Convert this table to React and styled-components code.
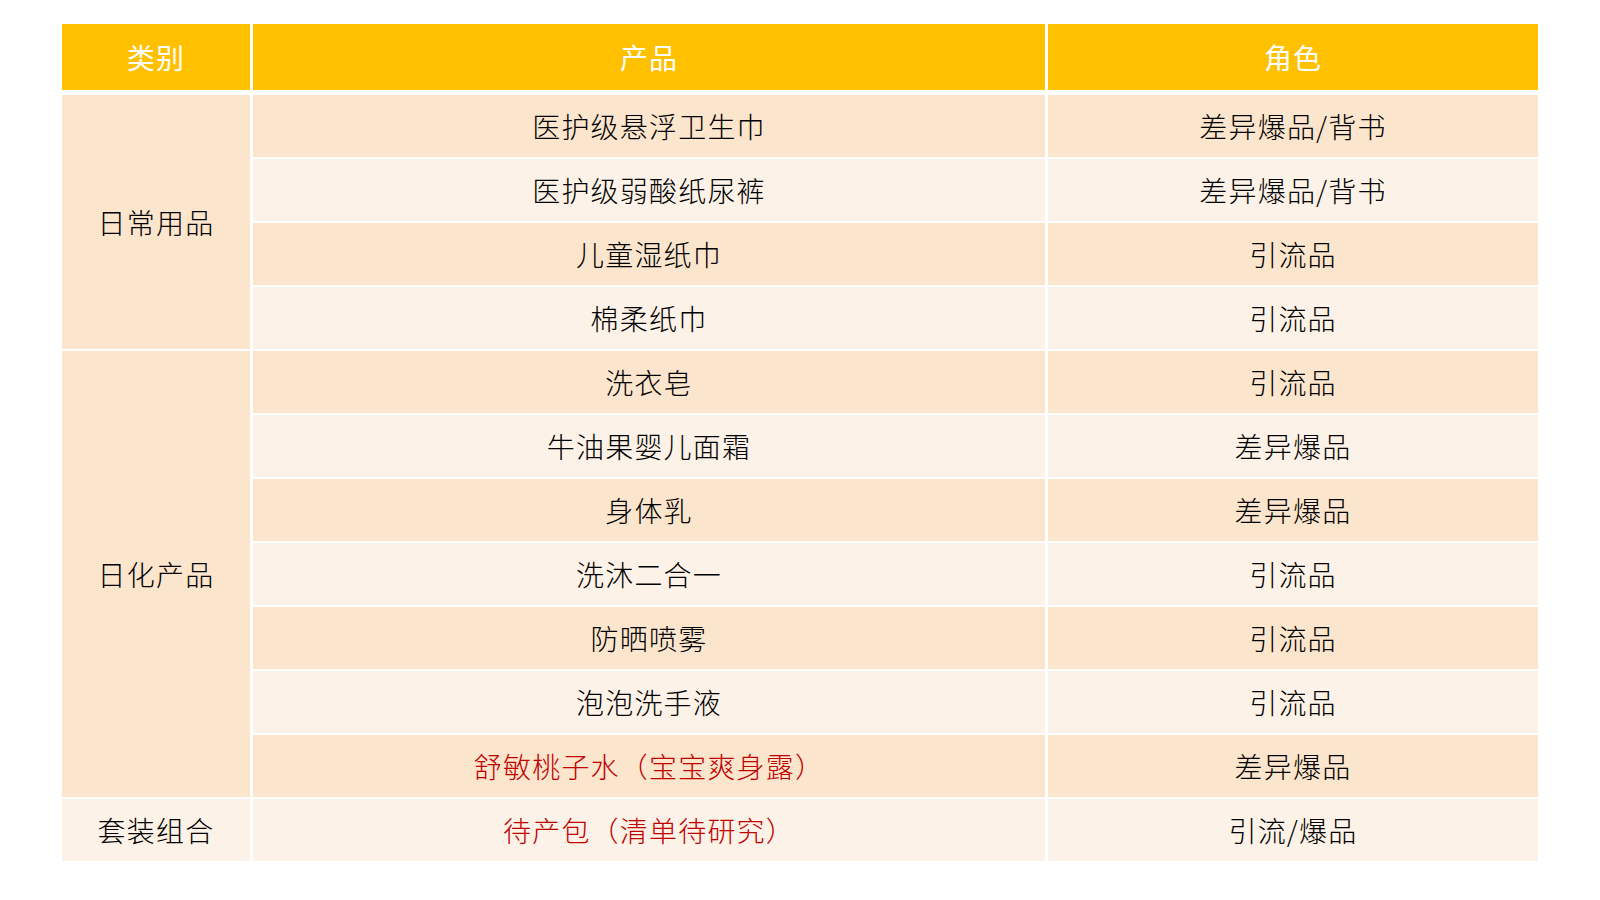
import React from 'react';
import styled, { createGlobalStyle } from 'styled-components';

const GlobalStyle = createGlobalStyle`
  html, body {
    margin: 0;
    padding: 0;
    background: #ffffff;
  }
  body {
    font-family: "Noto Sans CJK SC", "Noto Sans", sans-serif;
  }
`;

const Page = styled.div`
  width: 1600px;
  height: 900px;
  padding: 24px 0 0 62px;
  box-sizing: border-box;
`;

const Grid = styled.div`
  display: grid;
  grid-template-columns: 188px 792px 490px;
  column-gap: 3px;
  row-gap: 2px;
  grid-auto-rows: 62px;
`;

const HeaderGrid = styled(Grid)`
  grid-auto-rows: 66px;
  margin-bottom: 5px;
`;

const HeadCell = styled.div`
  background: #ffc000;
  color: #ffffff;
  font-size: 28px;
  font-weight: 400;
  letter-spacing: 1px;
  display: flex;
  align-items: center;
  justify-content: center;
`;

const Cell = styled.div`
  background: ${(p) => (p.$dark ? '#fce5cd' : '#fdf2e7')};
  color: ${(p) => (p.$red ? '#c00000' : '#000000')};
  font-size: 28px;
  font-weight: 300;
  letter-spacing: 1.2px;
  display: flex;
  align-items: center;
  justify-content: center;
  grid-row: ${(p) => (p.$span ? `span ${p.$span}` : 'auto')};
`;

const groups = [
  {
    name: '日常用品',
    dark: true,
    items: [
      ['医护级悬浮卫生巾', '差异爆品/背书'],
      ['医护级弱酸纸尿裤', '差异爆品/背书'],
      ['儿童湿纸巾', '引流品'],
      ['棉柔纸巾', '引流品'],
    ],
  },
  {
    name: '日化产品',
    dark: true,
    items: [
      ['洗衣皂', '引流品'],
      ['牛油果婴儿面霜', '差异爆品'],
      ['身体乳', '差异爆品'],
      ['洗沐二合一', '引流品'],
      ['防晒喷雾', '引流品'],
      ['泡泡洗手液', '引流品'],
      ['舒敏桃子水（宝宝爽身露）', '差异爆品', true],
    ],
  },
  {
    name: '套装组合',
    dark: false,
    items: [['待产包（清单待研究）', '引流/爆品', true]],
  },
];

export default function App() {
  let rowIndex = 0;
  const cells = [];
  groups.forEach((g) => {
    cells.push(
      <Cell key={g.name} $dark={g.dark} $span={g.items.length} style={{ gridColumn: 1 }}>
        {g.name}
      </Cell>
    );
    g.items.forEach(([product, role, red]) => {
      const dark = rowIndex % 2 === 0;
      rowIndex += 1;
      cells.push(
        <Cell key={product + 'p'} $dark={dark} $red={red} style={{ gridColumn: 2 }}>
          {product}
        </Cell>,
        <Cell key={product + 'r'} $dark={dark} style={{ gridColumn: 3 }}>
          {role}
        </Cell>
      );
    });
  });

  return (
    <Page>
      <GlobalStyle />
      <HeaderGrid>
        <HeadCell>类别</HeadCell>
        <HeadCell>产品</HeadCell>
        <HeadCell>角色</HeadCell>
      </HeaderGrid>
      <Grid>{cells}</Grid>
    </Page>
  );
}
